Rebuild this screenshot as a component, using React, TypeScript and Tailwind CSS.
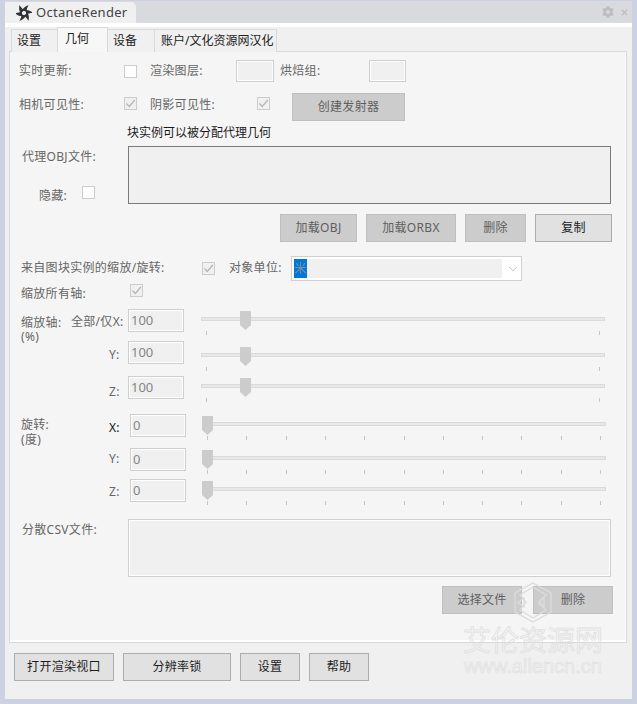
import type { ReactNode } from 'react';
import { ChevronDown, X } from 'lucide-react';
import { FaCog } from 'react-icons/fa';
import clsx from 'clsx';

const Check = ({ checked = false }: { checked?: boolean }) => (
  <div
    className={clsx(
      'h-[13px] w-[13px] shrink-0 border border-[#cccccc]',
      checked ? 'bg-[#f0f0f0]' : 'bg-white'
    )}
  >
    {checked && (
      <svg viewBox="0 0 11 11" className="h-[11px] w-[11px]">
        <path d="M1.5 5.5 L4.3 8.5 L9.8 2" fill="none" stroke="#b4b4b4" strokeWidth="1.2" />
      </svg>
    )}
  </div>
);

const Field = ({ className, value }: { className: string; value?: string }) => (
  <div
    className={clsx(
      'flex shrink-0 items-center border border-[#cfcfcf] bg-[#f0f0f0] pl-[2px] text-[13px] tracking-normal text-[#868686] shadow-[inset_0_0_0_1px_#ffffff]',
      className
    )}
  >
    {value}
  </div>
);

const Btn = ({
  w,
  primary = false,
  children
}: {
  w: string;
  primary?: boolean;
  children: ReactNode;
}) => (
  <div
    className={clsx(
      'flex h-[28px] shrink-0 items-center justify-center border',
      w,
      primary
        ? 'border-[#adadad] bg-[#e1e1e1] text-[#1c1c1c]'
        : 'border-[#bfbfbf] bg-[#cccccc] text-[#5f5f5f]'
    )}
  >
    {children}
  </div>
);

const Slider = ({
  ticks,
  thumb,
  className
}: {
  ticks: number[];
  thumb: string;
  className: string;
}) => (
  <div className={clsx('relative h-[20px] w-[404px] shrink-0', className)}>
    <div className="absolute inset-x-0 top-[6px] h-[4px] border border-[#d9dbd9] bg-[#e7e9e7]" />
    {ticks.map((x) => (
      <div key={x} className="absolute top-[20px] h-[4px] w-px bg-[#c4c4c4]" style={{ left: x }} />
    ))}
    <div
      className={clsx(
        'absolute top-0 h-[19px] w-[11px] bg-[#cccccc] [clip-path:polygon(0_0,100%_0,100%_74%,50%_100%,0_74%)]',
        thumb
      )}
    />
  </div>
);

const scaleTicks = [5, 398];
const rotateTicks = Array.from({ length: 11 }, (_, i) => Math.round(5 + i * 39.3));

const ScaleRow = ({
  label,
  labelClass,
  className,
  sliderClass
}: {
  label: string;
  labelClass: string;
  className?: string;
  sliderClass: string;
}) => (
  <div className={clsx('flex h-[23px] items-center', className)}>
    <div className={clsx('w-[57px] shrink-0', labelClass)}>{label}</div>
    <Field className="h-[23px] w-[56px]" value="100" />
    <Slider ticks={scaleTicks} thumb="left-[39px]" className={clsx('ml-[17px] self-start', sliderClass)} />
  </div>
);

const RotateRow = ({
  label,
  className,
  labelClass
}: {
  label: string;
  className?: string;
  labelClass?: string;
}) => (
  <div className={clsx('flex h-[23px] items-center', className)}>
    <div className={clsx('w-[49px] shrink-0 pl-[28px]', labelClass)}>{label}</div>
    <Field className="h-[23px] w-[56px]" value="0" />
    <Slider ticks={rotateTicks} thumb="left-0" className="ml-[16px] mt-[2px] self-start" />
  </div>
);

const OctaneLogo = () => (
  <svg viewBox="0 0 16 16" className="h-[16px] w-[16px] shrink-0">
    {[0, 60, 120, 180, 240, 300].map((a) => (
      <path
        key={a}
        transform={`rotate(${a} 8 8)`}
        d="M6 5.4 C7 3 9.5 0.9 12.6 0.2 C11.2 2.4 10.7 4.2 10.5 6.6 Z"
        fill="#2f3338"
      />
    ))}
  </svg>
);

const Watermark = () => (
  <div className="pointer-events-none absolute left-[462px] top-[582px] flex w-[142px] flex-col items-center">
    <svg viewBox="0 0 38 41" className="h-[41px] w-[38px]" fill="none" stroke="#dcdcdc" strokeWidth="1.3">
      <path d="M19 1 L37 11 L37 30 L19 40 L1 30 L1 11 Z" />
      <path d="M19 5 L32 13 L26 20 L32 28 L19 36" />
      <path d="M19 5 L6 13 L12 20 L6 28 L19 36" />
      <path d="M30 15 L24 20.5 L30 26 Z" />
      <path d="M4 20.5 L10 16 L10 25 Z" />
    </svg>
    <div className="mt-[2px] whitespace-nowrap text-[28px] leading-[30px] tracking-normal text-transparent [-webkit-text-stroke:0.8px_#e0e0e0]">
      艾伦资源网
    </div>
    <div className="whitespace-nowrap font-['Liberation_Sans',sans-serif] text-[20px] leading-[22px] tracking-normal text-transparent [-webkit-text-stroke:0.7px_#e0e0e0]">
      www.allencn.cn
    </div>
  </div>
);

export default function App() {
  return (
    <div className="relative h-[704px] w-[637px] overflow-hidden bg-[#cdd2e3] px-[5px] pb-[5px] pt-px font-['Noto_Sans','Noto_Sans_CJK_SC',sans-serif] text-[12px] leading-none tracking-[0.3px] text-[#666666]">
      <div className="flex h-full flex-col bg-[#f0f0f0]">
        {/* title bar */}
        <div className="flex h-[22px] shrink-0 items-end bg-[#d9dade]">
          <div className="flex h-[21px] w-[131px] items-center rounded-tr-[5px] bg-[#f0f0f0] pl-[11px]">
            <OctaneLogo />
            <span className="ml-[4px] text-[13px] tracking-[0.3px] text-[#444444]">OctaneRender</span>
          </div>
          <div className="flex h-full flex-1 items-center justify-end pr-[3px] text-[#bdbdbd]">
            <FaCog size={12} />
            <X size={9} strokeWidth={3.5} className="ml-[6px]" />
          </div>
        </div>
        <div className="h-[4px] shrink-0 bg-white" />

        {/* tabs */}
        <div className="relative z-10 flex h-[25px] shrink-0 items-end whitespace-nowrap pl-[6px] tracking-normal text-[#222222]">
          <div className="flex h-[23px] w-[46px] items-center border border-b-0 border-r-0 border-[#d9d9d9] bg-[#f0f0f0] pl-[5px]">设置</div>
          <div className="flex h-[25px] w-[51px] items-center border border-b-0 border-[#d9d9d9] bg-[#f7f7f7] pb-[3px] pl-[7px]">几何</div>
          <div className="flex h-[23px] w-[46px] items-center border-t border-[#d9d9d9] bg-[#f0f0f0] pl-[5px]">设备</div>
          <div className="flex h-[23px] w-[123px] items-center border border-b-0 border-[#d9d9d9] bg-[#f0f0f0] pl-[6px]">账户/文化资源网汉化</div>
        </div>

        {/* geometry panel */}
        <div className="-mt-px ml-[4px] h-[592px] w-[618px] shrink-0 border border-[#d9d9d9] bg-[#f5f5f5] shadow-[inset_-1px_-2px_0_#ffffff]">
          <div className="mt-[8px] flex h-[22px] items-center">
            <div className="ml-[9px] w-[105px]">实时更新:</div>
            <Check />
            <div className="ml-[13px] w-[86px]">渲染图层:</div>
            <Field className="h-[22px] w-[38px]" />
            <div className="ml-[6px] w-[89px]">烘焙组:</div>
            <Field className="h-[22px] w-[37px]" />
          </div>

          <div className="mt-[11px] flex h-[28px] items-center">
            <div className="-mt-[5px] ml-[9px] w-[105px]">相机可见性:</div>
            <div className="-mt-[7px]">
              <Check checked />
            </div>
            <div className="-mt-[5px] ml-[13px] w-[107px]">阴影可见性:</div>
            <div className="-mt-[7px]">
              <Check checked />
            </div>
            <div className="ml-[22px]">
              <Btn w="w-[113px]">创建发射器</Btn>
            </div>
          </div>

          <div className="ml-[117px] mt-[5px] flex h-[14px] items-center tracking-normal text-[#1a1a1a]">块实例可以被分配代理几何</div>

          <div className="mt-[6px] flex h-[58px]">
            <div className="w-[118px] shrink-0">
              <div className="ml-[12px] mt-[5px]">代理OBJ文件:</div>
              <div className="ml-[29px] mt-[25px] flex items-start">
                <span className="mt-[2px] w-[43px]">隐藏:</span>
                <div className="-mt-[2px]">
                  <Check />
                </div>
              </div>
            </div>
            <div className="w-[483px] border border-[#7a7a7a] bg-[#f0f0f0]" />
          </div>

          <div className="ml-[270px] mt-[10px] flex gap-[9px]">
            <Btn w="w-[77px]">加载OBJ</Btn>
            <Btn w="w-[90px]">加载ORBX</Btn>
            <Btn w="w-[61px]">删除</Btn>
            <Btn w="w-[77px]" primary>复制</Btn>
          </div>

          <div className="mt-[14px] flex h-[25px] items-center">
            <div className="ml-[11px] w-[181px] pb-[1px]">来自图块实例的缩放/旋转:</div>
            <Check checked />
            <div className="ml-[14px] w-[62px] pb-[1px]">对象单位:</div>
            <div className="flex h-[25px] w-[231px] items-center border border-[#d0d0d0] bg-white pl-[2px]">
              <div className="flex h-[19px] w-[13px] items-center justify-center bg-[#0078d7] text-[#7f8fa0]">米</div>
              <div className="h-[19px] w-[195px] bg-[#f0f0f0]" />
              <ChevronDown size={14} strokeWidth={1} className="ml-[4px] text-[#8c8c8c]" />
            </div>
          </div>

          <div className="mt-px flex h-[18px] items-center">
            <div className="ml-[11px] mt-[6px] w-[109px]">缩放所有轴:</div>
            <div className="-mt-[1px]">
              <Check checked />
            </div>
          </div>

          {/* scale axes */}
          <div className="mt-[9px] flex">
            <div className="ml-[11px] w-[61px] shrink-0 pt-[8px]">
              <div>缩放轴:</div>
              <div className="mt-[2px]">(%)</div>
            </div>
            <div className="-ml-[11px]">
              <ScaleRow label="全部/仅X:" labelClass="pt-[2px]" sliderClass="mt-[2px]" />
              <ScaleRow label="Y:" labelClass="pl-[38px] pt-[4px]" className="mt-[9px]" sliderClass="mt-[6px]" />
              <ScaleRow label="Z:" labelClass="pl-[38px] pt-[8px]" className="mt-[12px]" sliderClass="mt-[2px]" />
            </div>
          </div>

          {/* rotation */}
          <div className="mt-[15px] flex">
            <div className="ml-[11px] w-[60px] shrink-0 pt-[5px]">
              <div>旋转:</div>
              <div className="mt-[3px]">(度)</div>
            </div>
            <div>
              <RotateRow label="X:" labelClass="pt-[4px] text-[#111111]" />
              <RotateRow label="Y:" labelClass="pb-[2px]" className="mt-[11px]" />
              <RotateRow label="Z:" labelClass="pt-[2px]" className="mt-[8px]" />
            </div>
          </div>

          <div className="mt-[17px] flex h-[58px]">
            <div className="ml-[12px] mt-[5px] w-[106px] shrink-0">分散CSV文件:</div>
            <div className="w-[483px] border border-[#cfcfcf] bg-[#f0f0f0] shadow-[inset_0_0_0_1px_#ffffff]" />
          </div>

          <div className="ml-[432px] mt-[9px] flex gap-[11px]">
            <Btn w="w-[80px]">选择文件</Btn>
            <Btn w="w-[80px]">删除</Btn>
          </div>
        </div>

        {/* footer buttons */}
        <div className="ml-[9px] mt-[10px] flex gap-[9px]">
          <Btn w="w-[100px]" primary>打开渲染视口</Btn>
          <Btn w="w-[108px]" primary>分辨率锁</Btn>
          <Btn w="w-[60px]" primary>设置</Btn>
          <Btn w="w-[60px]" primary>帮助</Btn>
        </div>
      </div>
      <Watermark />
    </div>
  );
}
